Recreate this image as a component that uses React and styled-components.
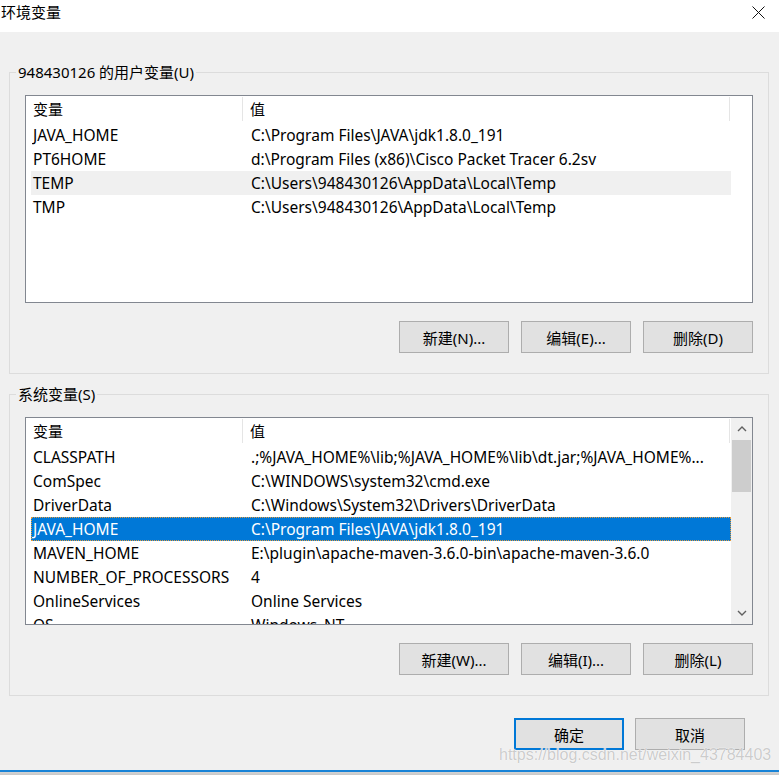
import React from "react";
import styled, { createGlobalStyle } from "styled-components";

const GlobalStyle = createGlobalStyle`
  html, body {
    margin: 0;
    padding: 0;
    background: #f0f0f0;
  }
  body {
    font-family: "Noto Sans", "Noto Sans CJK SC", sans-serif;
    font-size: 15px;
    color: #000;
  }
`;

const userVars = [
  ["JAVA_HOME", "C:\\Program Files\\JAVA\\jdk1.8.0_191"],
  ["PT6HOME", "d:\\Program Files (x86)\\Cisco Packet Tracer 6.2sv"],
  ["TEMP", "C:\\Users\\948430126\\AppData\\Local\\Temp"],
  ["TMP", "C:\\Users\\948430126\\AppData\\Local\\Temp"],
];

const sysVars = [
  ["CLASSPATH", ".;%JAVA_HOME%\\lib;%JAVA_HOME%\\lib\\dt.jar;%JAVA_HOME%..."],
  ["ComSpec", "C:\\WINDOWS\\system32\\cmd.exe"],
  ["DriverData", "C:\\Windows\\System32\\Drivers\\DriverData"],
  ["JAVA_HOME", "C:\\Program Files\\JAVA\\jdk1.8.0_191"],
  ["MAVEN_HOME", "E:\\plugin\\apache-maven-3.6.0-bin\\apache-maven-3.6.0"],
  ["NUMBER_OF_PROCESSORS", "4"],
  ["OnlineServices", "Online Services"],
  ["OS", "Windows_NT"],
];

function CloseIcon() {
  return (
    <svg width="13" height="13" viewBox="0 0 13 13">
      <path d="M0.5 0.5 L12.5 12.5 M12.5 0.5 L0.5 12.5" stroke="#111" strokeWidth="1" fill="none" />
    </svg>
  );
}

function Chevron({ up }) {
  return (
    <svg width="10" height="6" viewBox="0 0 10 6">
      <path
        d={up ? "M1 5 L5 1 L9 5" : "M1 1 L5 5 L9 1"}
        stroke="#606060"
        strokeWidth="1.4"
        fill="none"
      />
    </svg>
  );
}

function VarList({ rows, hover, selected, scroll }) {
  return (
    <ListBox>
      <ListMain>
        <HeaderRow>
          <HeadCell $w={212}>变量</HeadCell>
          <HeadCell $w={487} $value>值</HeadCell>
        </HeaderRow>
        {rows.map(([name, value], i) => (
          <Row key={name + i} $hover={i === hover} $selected={i === selected}>
            <NameCell>{name}</NameCell>
            <ValueCell>{value}</ValueCell>
          </Row>
        ))}
      </ListMain>
      {scroll && (
        <ScrollBar>
          <ArrowBtn>
            <Chevron up />
          </ArrowBtn>
          <Track>
            <Thumb />
          </Track>
          <ArrowBtn>
            <Chevron />
          </ArrowBtn>
        </ScrollBar>
      )}
    </ListBox>
  );
}

export default function App() {
  return (
    <Window>
      <GlobalStyle />
      <TitleBar>
        <Title>环境变量</Title>
        <CloseBtn>
          <CloseIcon />
        </CloseBtn>
      </TitleBar>
      <Body>
        <Group>
          <Legend>948430126 的用户变量(U)</Legend>
          <VarList rows={userVars} hover={2} />
          <ButtonRow>
            <Button>新建(N)...</Button>
            <Button>编辑(E)...</Button>
            <Button>删除(D)</Button>
          </ButtonRow>
        </Group>
        <Group $second>
          <Legend>系统变量(S)</Legend>
          <VarList rows={sysVars} selected={3} scroll />
          <ButtonRow>
            <Button>新建(W)...</Button>
            <Button>编辑(I)...</Button>
            <Button>删除(L)</Button>
          </ButtonRow>
        </Group>
        <DialogButtons>
          <Button $primary>确定</Button>
          <Button>取消</Button>
        </DialogButtons>
      </Body>
      <Taskbar />
      <Watermark>https://blog.csdn.net/weixin_43784403</Watermark>
    </Window>
  );
}

const Window = styled.div`
  position: relative;
  width: 779px;
  height: 775px;
  overflow: hidden;
  background: #f0f0f0;
`;

const TitleBar = styled.div`
  height: 32px;
  background: #fff;
  display: flex;
  justify-content: space-between;
  align-items: flex-start;
`;

const Title = styled.div`
  padding: 2px 0 0 1px;
  font-size: 15px;
  line-height: 20px;
`;

const CloseBtn = styled.div`
  width: 42px;
  height: 25px;
  display: flex;
  align-items: center;
  justify-content: center;
`;

const Body = styled.div`
  height: 738px;
  box-sizing: border-box;
  padding: 30px 10px 0 9px;
  display: flex;
  flex-direction: column;
`;

const Group = styled.fieldset`
  margin: ${(p) => (p.$second ? "10px" : "0")} 0 0 0;
  padding: 13px 15px 20px 15px;
  border: 1px solid #dcdcdc;
  min-width: 0;
`;

const Legend = styled.legend`
  padding: 0 2px;
  margin-left: -9px;
  line-height: 20px;
  font-size: 15px;
  color: #000;
`;

const ListBox = styled.div`
  height: 208px;
  box-sizing: border-box;
  border: 1px solid #828790;
  background: #fff;
  display: flex;
  overflow: hidden;
  font-size: 15.5px;
`;

const ListMain = styled.div`
  flex: 1;
  padding-left: 5px;
  overflow: hidden;
`;

const HeaderRow = styled.div`
  display: flex;
  height: 27px;
`;

const HeadCell = styled.div`
  width: ${(p) => p.$w}px;
  box-sizing: border-box;
  padding-left: ${(p) => (p.$value ? "7px" : "2px")};
  border-right: 1px solid #e5e5e5;
  margin: 1px 0 2px;
  line-height: 24px;
  font-size: 15px;
  flex-shrink: 0;
`;

const Row = styled.div`
  display: flex;
  width: 700px;
  height: 24px;
  box-sizing: border-box;
  padding-top: 1px;
  line-height: 20px;
  border: 1px ${(p) => (p.$selected ? "dotted #e39b3e" : "solid transparent")};
  background: ${(p) => (p.$selected ? "#0078d7" : p.$hover ? "#f0f0f0" : "transparent")};
  color: ${(p) => (p.$selected ? "#fff" : "#000")};
  white-space: nowrap;
`;

const NameCell = styled.div`
  width: 211px;
  padding-left: 1px;
  flex-shrink: 0;
  overflow: hidden;
`;

const ValueCell = styled.div`
  flex: 1;
  padding-left: 7px;
  overflow: hidden;
`;

const ScrollBar = styled.div`
  width: 21px;
  display: flex;
  flex-direction: column;
  background: #f0f0f0;
  flex-shrink: 0;
`;

const ArrowBtn = styled.div`
  height: 22px;
  display: flex;
  align-items: center;
  justify-content: center;
  flex-shrink: 0;
`;

const Track = styled.div`
  flex: 1;
`;

const Thumb = styled.div`
  height: 52px;
  margin: 0 1px;
  background: #cdcdcd;
`;

const ButtonRow = styled.div`
  display: flex;
  justify-content: flex-end;
  gap: 12px;
  margin-top: 18px;
`;

const Button = styled.div`
  width: 110px;
  height: 32px;
  box-sizing: border-box;
  border: ${(p) => (p.$primary ? "2px solid #0078d7" : "1px solid #adadad")};
  background: #e1e1e1;
  display: flex;
  align-items: center;
  justify-content: center;
  font-size: 15px;
`;

const DialogButtons = styled.div`
  display: flex;
  justify-content: flex-end;
  gap: 11px;
  margin-top: 22px;
  padding-right: 24px;
`;

const Taskbar = styled.div`
  height: 5px;
  border-top: 2px solid #1883d7;
  box-sizing: border-box;
  background: linear-gradient(#d4d4d4, #c8c8c8);
`;

const Watermark = styled.div`
  position: absolute;
  left: 499px;
  top: 746px;
  font-family: "Liberation Sans", Arial, sans-serif;
  font-size: 16px;
  color: rgba(190, 190, 190, 0.8);
  text-shadow: 0 0 1px #fff, 0 0 1px #fff;
  white-space: nowrap;
  pointer-events: none;
`;
